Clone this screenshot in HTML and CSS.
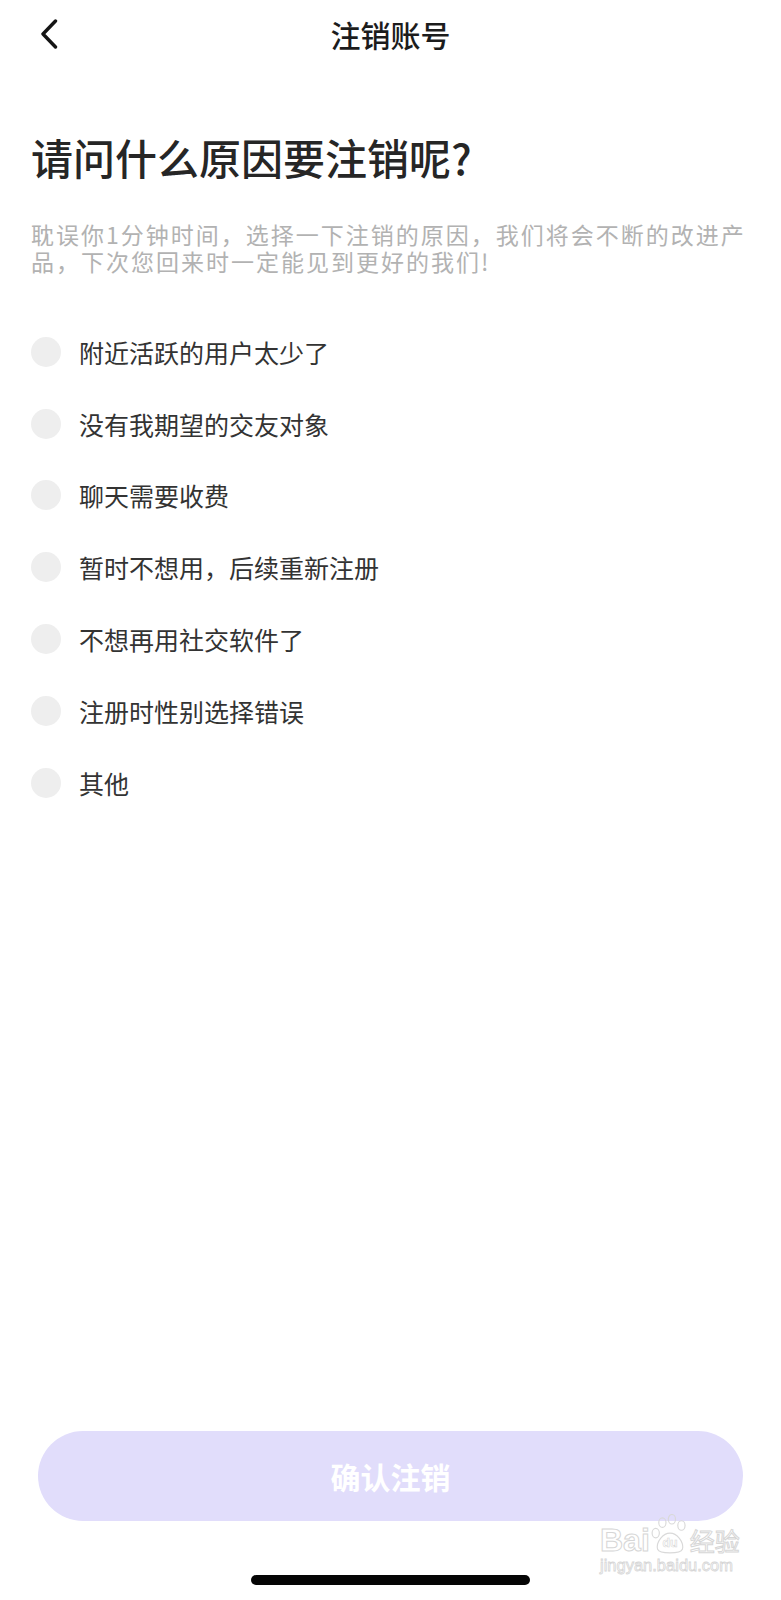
FILE: index.html
```html
<!DOCTYPE html>
<html lang="zh-CN">
<head>
<meta charset="utf-8">
<title>注销账号</title>
<link rel="stylesheet" href="styles.css">
</head>
<body>
<div class="page">
  <header class="nav">
    <div class="nav-left">
      <svg class="back" width="20" height="30" viewBox="0 0 20 30">
        <polyline points="15.5,2 3,15 15.5,28" fill="none" stroke="#151515" stroke-width="3.4" stroke-linecap="round" stroke-linejoin="round"/>
      </svg>
    </div>
    <div class="nav-title">注销账号</div>
    <div class="nav-right"></div>
  </header>

  <main class="content">
    <h1 class="heading">请问什么原因要注销呢?</h1>
    <p class="desc">耽误你1分钟时间，选择一下注销的原因，我们将会不断的改进产品，下次您回来时一定能见到更好的我们!</p>

    <ul class="reasons">
      <li class="reason"><span class="radio"></span><span class="label">附近活跃的用户太少了</span></li>
      <li class="reason"><span class="radio"></span><span class="label">没有我期望的交友对象</span></li>
      <li class="reason"><span class="radio"></span><span class="label">聊天需要收费</span></li>
      <li class="reason"><span class="radio"></span><span class="label">暂时不想用，后续重新注册</span></li>
      <li class="reason"><span class="radio"></span><span class="label">不想再用社交软件了</span></li>
      <li class="reason"><span class="radio"></span><span class="label">注册时性别选择错误</span></li>
      <li class="reason"><span class="radio"></span><span class="label">其他</span></li>
    </ul>
  </main>

  <footer class="footer">
    <button class="confirm" type="button">确认注销</button>
    <div class="home-indicator"></div>
  </footer>

  <div class="watermark">
    <div class="wm-top">
      <span class="wm-bai">Bai</span>
      <span class="wm-paw">
        <svg width="40" height="42" viewBox="0 0 42 44">
          <g fill="none" stroke="#d9d9d9" stroke-width="1.2">
            <ellipse cx="13" cy="9" rx="3.8" ry="5"/>
            <ellipse cx="23" cy="5.5" rx="3.8" ry="5"/>
            <ellipse cx="33" cy="12" rx="3.8" ry="5"/>
            <ellipse cx="6" cy="20" rx="3.8" ry="5"/>
            <path d="M8 37 C 6 29, 14 20, 21 20 C 28 20, 36 29, 34 37 C 32 42, 10 42, 8 37 Z"/>
          </g>
          <text x="21" y="35" text-anchor="middle" class="wm-du">du</text>
        </svg>
      </span>
      <span class="wm-jy">经验</span>
    </div>
    <div class="wm-url">jingyan.baidu.com</div>
  </div>
</div>
</body>
</html>
```

FILE: styles.css
```css
* {
  box-sizing: border-box;
}

html, body {
  margin: 0;
  padding: 0;
  background: #ffffff;
}

body {
  font-family: "Noto Sans CJK SC", "Noto Sans", "Liberation Sans", sans-serif;
  color: #222222;
}

.page {
  position: relative;
  width: 781px;
  height: 1600px;
  display: flex;
  flex-direction: column;
  overflow: hidden;
}

.nav {
  height: 68px;
  display: grid;
  grid-template-columns: 1fr auto 1fr;
  align-items: center;
}

.nav-left {
  display: flex;
  align-items: center;
  padding-left: 40px;
}

.back {
  display: block;
}

.nav-title {
  font-size: 30px;
  font-weight: 500;
  color: #1c1c1c;
  line-height: 40px;
}

.content {
  padding: 0 31px;
  flex: 1;
}

.heading {
  margin: 65px 0 0;
  font-size: 42px;
  line-height: 48px;
  font-weight: 500;
  color: #262626;
}

.desc {
  margin: 40px 0 0;
  font-size: 23px;
  letter-spacing: 2px;
  line-height: 27px;
  color: #b2b2b2;
}

.reasons {
  list-style: none;
  margin: 41px 0 0;
  padding: 0;
}

.reason {
  height: 71.8px;
  display: flex;
  align-items: center;
  gap: 18px;
}

.radio {
  width: 30px;
  height: 30px;
  border-radius: 50%;
  background: #eeeeee;
  flex: none;
}

.label {
  font-size: 25px;
  color: #333333;
  line-height: 30px;
}

.footer {
  display: flex;
  flex-direction: column;
  align-items: center;
}

.confirm {
  width: 705px;
  height: 90px;
  border: none;
  border-radius: 45px;
  background: #e1ddfb;
  color: #ffffff;
  font-family: inherit;
  font-size: 30px;
  font-weight: 700;
  margin: 0 0 54px;
  padding: 0;
}

.home-indicator {
  width: 279px;
  height: 10px;
  border-radius: 5px;
  background: #050505;
  margin-bottom: 15px;
}

.watermark {
  position: absolute;
  left: 600px;
  top: 1508px;
  width: 150px;
  color: #ffffff;
  font-family: "Liberation Sans", sans-serif;
}

.wm-top {
  display: flex;
  align-items: flex-end;
  height: 48px;
}

.wm-bai {
  font-size: 32px;
  font-weight: 700;
  line-height: 31px;
  color: #ffffff;
  -webkit-text-stroke: 1px #d6d6d6;
}

.wm-paw svg {
  display: block;
}

.wm-du {
  font-family: "Liberation Sans", sans-serif;
  font-size: 13px;
  font-weight: 700;
  fill: #ffffff;
  stroke: #d6d6d6;
  stroke-width: 0.6;
}

.wm-jy {
  font-family: "Noto Sans CJK SC", sans-serif;
  font-size: 25px;
  line-height: 31px;
  color: #ffffff;
  -webkit-text-stroke: 1px #d6d6d6;
}

.wm-url {
  font-size: 16.5px;
  line-height: 19px;
  color: #ffffff;
  -webkit-text-stroke: 0.8px #d6d6d6;
}
```
